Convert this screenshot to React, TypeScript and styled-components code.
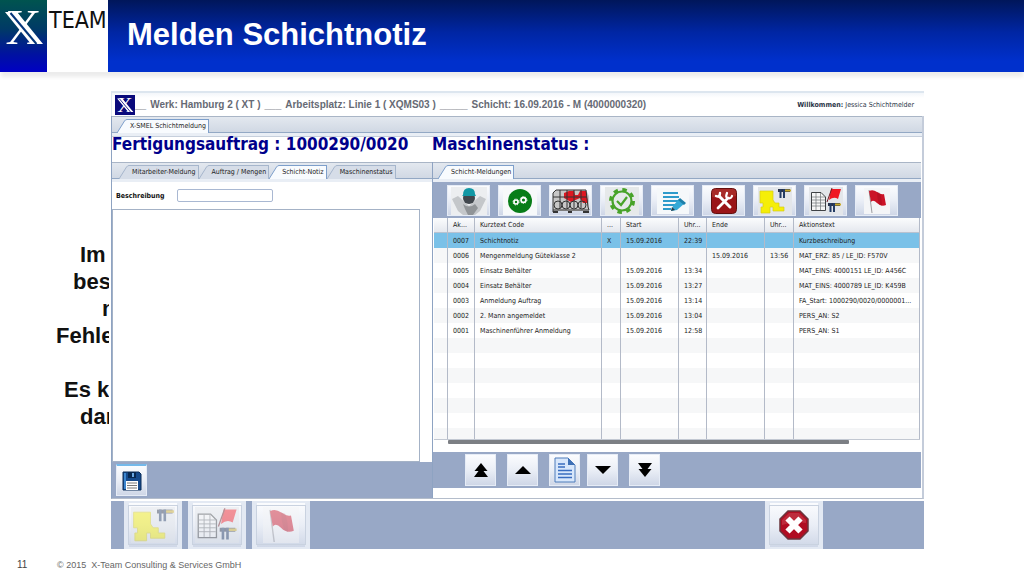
import React from "react";
import styled, { createGlobalStyle } from "styled-components";

const UI = `"DejaVu Sans Condensed", "Noto Sans", sans-serif`;
const ARIAL = `"Liberation Sans", Arial, sans-serif`;
const steel = "#98a8c6";
const line = "#8ea3c2";

const GlobalStyle = createGlobalStyle`
  *, *::before, *::after { box-sizing: border-box; }
  body { margin: 0; background: #fff; font-family: ${ARIAL}; color: #111; }
  button, input, textarea { font-family: inherit; margin: 0; }
`;

const Page = styled.div`
  display: flex;
  flex-direction: column;
  min-height: 100vh;
  overflow: hidden;
`;

const SlideHeader = styled.header`
  display: flex;
  height: 72px;
  box-shadow: 0 6px 4px -1px #ececec;
`;

const BrandMark = styled.div`
  flex: none;
  width: 47px;
  background: linear-gradient(#00544f, #003a66 40%, #0012a0 75%, #0000c4);
`;

const BrandName = styled.div`
  flex: none;
  width: 61px;
  padding: 7px 0 0 2px;
  background: #fff;
  font: 400 23px/27px ${UI};
  white-space: nowrap;
`;

const TitleBar = styled.div`
  flex: 1;
  display: flex;
  align-items: center;
  padding: 0 19px 2px;
  background: linear-gradient(#00165a, #0026a4 45%, #0030cc 85%, #0030cc);
`;

const Title = styled.h1`
  margin: 0;
  color: #fff;
  font-size: 31px;
  line-height: 36px;
`;

const Stage = styled.main`
  display: flex;
  padding-top: 19px;
`;

const Notes = styled.aside`
  flex: none;
  width: 111px;
  padding-top: 150px;
  border-right: 2px solid #fff;
  overflow: hidden;
`;

const NoteLine = styled.p<{ $indent: number }>`
  margin: 0;
  min-height: 27px;
  padding-left: ${(p) => p.$indent}px;
  font-size: 22px;
  font-weight: 700;
  line-height: 27px;
  white-space: nowrap;
`;

const Frame = styled.section`
  flex: 1;
  min-width: 0;
  margin-right: 100px;
  font-family: ${UI};
`;

const InfoBar = styled.div`
  display: flex;
  align-items: center;
  height: 25px;
  padding: 0 10px 0 3px;
  border-top: 2px solid #dde6ef;
  border-left: 1px solid #dde6ef;
  background: linear-gradient(#f3f6fa, #fff 5px);
`;

const InfoText = styled.div`
  display: flex;
  gap: 4px;
  flex: 1;
  color: #666a74;
  font: 700 10px/14px ${ARIAL};
  white-space: pre;
`;

const Welcome = styled.div`
  color: #2a3547;
  font-size: 7px;
  white-space: nowrap;
`;

const Body = styled.div`
  border-left: 1px solid ${line};
  border-right: 2px solid #c4ccda;
  border-bottom: 1px solid #b4bdcb;
`;

const TabStrip = styled.div<{ $start?: number }>`
  display: flex;
  align-items: flex-end;
  height: 20px;
  padding-left: ${(p) => p.$start ?? 0}px;
  border-top: 1px solid #a9b5c6;
  border-bottom: 3px solid #e9eef5;
  background: linear-gradient(#e3e8ef, #cfd7e3);
  box-shadow: inset 0 -1px 0 #93a8c4;
`;

const TabButton = styled.button<{ $active?: boolean }>`
  display: flex;
  height: 14px;
  padding: 0;
  border: 0;
  background: none;
  color: #222;
  font-size: 7px;
  line-height: 13px;
  white-space: nowrap;

  svg { display: block; }
  span {
    padding: 0 2px 0 3px;
    border-top: 1px solid ${(p) => (p.$active ? "#7d9fcb" : "#a6b6cc")};
    border-right: 1px solid ${(p) => (p.$active ? "#7d9fcb" : "#a6b6cc")};
    background: ${(p) => (p.$active ? "#f8fbfe" : "#d6dde8")};
  }
`;

const Headline = styled.div`
  display: grid;
  grid-template-columns: 320px 1fr;
  height: 26px;
  border-top: 1px solid #c6cfdc;
  background: #fff;
`;

const HeadlineText = styled.h2`
  margin: 0;
  color: #00008b;
  font: 700 17px/15px ${UI};
  white-space: nowrap;
`;

const Panels = styled.div`
  display: grid;
  grid-template-columns: 320px 1fr;
`;

const Panel = styled.section`
  display: flex;
  flex-direction: column;
  min-width: 0;
`;

const MessagePanel = styled(Panel)`
  margin-right: 1px;
  padding-bottom: 10px;
  border-left: 1px solid ${line};
`;

const FieldRow = styled.div`
  display: flex;
  align-items: center;
  height: 27px;
  padding-left: 4px;
`;

const FieldLabel = styled.label`
  width: 61px;
  font-size: 7px;
  font-weight: 700;
`;

const TextField = styled.input`
  width: 96px;
  height: 13px;
  padding: 0 3px;
  border: 1px solid #a9b8d2;
  border-radius: 2px;
  background: #fff;
  font-size: 7px;
`;

const NoteField = styled.textarea`
  display: block;
  width: 308px;
  height: 253px;
  padding: 3px;
  border: 1px solid #a4b2c6;
  background: #fff;
  font-size: 8px;
  resize: none;
`;

const SaveBar = styled.div`
  flex: 1;
  padding: 2px 4px;
  background: ${steel};
`;

const ToolBar = styled.div`
  display: flex;
  gap: 8px;
  height: 36px;
  padding: 3px 0 0 14px;
  background: ${steel};
`;

const PagerBar = styled.div`
  display: flex;
  gap: 7px;
  height: 36px;
  padding: 2px 0 0 32px;
  background: ${steel};
`;

const PagerGroup = styled.div`
  display: flex;
  gap: 11px;
`;

const IconButton = styled.button<{ $w: number; $h: number; $accent?: boolean }>`
  display: flex;
  align-items: center;
  justify-content: center;
  flex: none;
  width: ${(p) => p.$w}px;
  height: ${(p) => p.$h}px;
  padding: 0;
  border: 1px solid #e6ecf6;
  border-top: ${(p) => (p.$accent ? "2px solid #74b9ea" : "1px solid #e6ecf6")};
  background: linear-gradient(#fbfcfe, #eaeef6 50%, #cfd7e7);

  svg { display: block; }
`;

const FooterButton = styled(IconButton)`
  border: 4px solid #e3e9f3;
  border-width: 2px 5px;
  outline: 1px solid #c9d2e0;
  outline-offset: -5px;

  &:disabled svg { opacity: 0.45; }
`;

const TableArea = styled.div`
  height: 234px;
  overflow: hidden;
  padding: 0 1px;
  background: #fff;
`;

const TableClip = styled.div`
  height: 222px;
  overflow: hidden;
  border-bottom: 1px solid #c2c8d2;
`;

const MessageTable = styled.table`
  width: 100%;
  table-layout: fixed;
  border-collapse: separate;
  border-spacing: 0;
  color: #222;
  font-size: 7px;
  line-height: 14px;

  th, td {
    height: 15px;
    padding: 0 0 0 5px;
    border-right: 1px solid #b3bac8;
    font-weight: 400;
    text-align: left;
    white-space: nowrap;
    overflow: hidden;
  }
  th {
    background: linear-gradient(#fbfcfd, #e4e7ee);
    border-bottom: 1px solid #b9c2d0;
  }
`;

const MessageRow = styled.tr<{ $selected?: boolean }>`
  background: ${(p) => (p.$selected ? "#7ac1e8" : "#fff")};
  &:nth-child(even) { background: #f6f7f8; }
`;

const ScrollTrack = styled.div`
  height: 4px;
  padding-left: 14px;
`;

const ScrollThumb = styled.div`
  width: 85%;
  height: 4px;
  border-radius: 1px;
  background: #7c7f84;
`;

const BottomBar = styled.div`
  display: flex;
  gap: 6px;
  height: 48px;
  margin-top: 2px;
  padding: 0 101px 0 13px;
  background: ${steel};
`;

const Spacer = styled.div`
  flex: 1;
`;

const SlideFooter = styled.footer`
  display: flex;
  align-items: center;
  padding: 9px 0 0 17px;
  color: #666;
  font-size: 9px;
  line-height: 14px;
  white-space: pre;
`;

const PageNumber = styled.span`
  width: 40px;
  color: #444;
  font-size: 10px;
`;

function XMark({ size, boxed }: { size: number; boxed?: boolean }) {
  return (
    <svg width={size} height={boxed ? size : 72} viewBox={boxed ? "0 4 47 47" : "0 0 47 72"} role="img" aria-label="X">
      {boxed && <rect x="0" y="4" width="47" height="47" fill="#0a0a7c" />}
      <text x="23.5" y="44" textAnchor="middle" fontFamily="Liberation Serif, serif" fontSize="50" fill="#fff">X</text>
      <path d="M5 12H17L43 44H31Z" fill="#fff" />
      <path d="M10.500 13 36.500 44" stroke={boxed ? "#0a0a7c" : "#04357a"} strokeWidth="2" />
    </svg>
  );
}

function Tab({ label, active }: { label: string; active?: boolean }) {
  return (
    <TabButton type="button" role="tab" aria-selected={!!active} $active={active}>
      <svg width="10" height="14" viewBox="0 0 10 14">
        <path d="M0 14 7.500 2Q8.500 .5 10 .5V14Z" fill={active ? "#f8fbfe" : "#d6dde8"} />
        <path d="M0 14 7.500 2Q8.500 .5 10 .5" fill="none" stroke={active ? "#7d9fcb" : "#a6b6cc"} />
      </svg>
      <span>{label}</span>
    </TabButton>
  );
}

const WorkerIcon = () => (
  <svg width="36" height="28" viewBox="0 0 36 28">
    <rect width="36" height="28" fill="#eceef0" />
    <path d="M1 12 7 9 18 19 29 9 35 12 29 24 24 28H12L7 24Z" fill="#c4c7ca" />
    <path d="M12 17Q18 22 24 17L27 21 22 28H17L14 22Z" fill="#909497" />
    <circle cx="18" cy="11" r="6" fill="#41474d" />
    <path d="M12 8Q12 1 18 1T24 7L25 9H11Z" fill="#1298a5" />
  </svg>
);

const SmallGear = ({ x, y, r }: { x: number; y: number; r: number }) => (
  <g fill="none" stroke="#fff">
    <circle cx={x} cy={y} r={r} strokeWidth="1.600" />
    <circle cx={x} cy={y} r={r + 1} strokeWidth="1" strokeDasharray="1.200 1.200" />
  </g>
);

const GearsIcon = () => (
  <svg width="34" height="28" viewBox="0 0 34 28">
    <rect width="34" height="28" fill="#f7f9fa" />
    <circle cx="17" cy="14" r="12" fill="#087d18" />
    <SmallGear x={13} y={15} r={2} />
    <SmallGear x={20.5} y={13} r={2.4} />
  </svg>
);

const RackIcon = () => (
  <svg width="38" height="26" viewBox="0 0 38 26">
    <path d="M1 4 4 2H34L37 8V23H1Z" fill="#c7c7c7" />
    <path d="M12 5 17 3H22L23 7H26L28 3H34L36 15H31L28 10 19 14 12 10Z" fill="#df1721" />
    <g fill="none" stroke="#343434">
      <path d="M1 24V5L4 2H34L36 19 37 22H1M1 9H35M8 2V20M15 2V20M22 2V20M29 2V20" />
      <circle cx="6" cy="17" r="4" /><circle cx="14" cy="17" r="4" /><circle cx="22" cy="17" r="4" /><circle cx="30" cy="17" r="4" />
      <path d="M1 24H6M16 24H20M31 24H37" strokeWidth="2" />
    </g>
  </svg>
);

const QualityIcon = () => (
  <svg width="34" height="28" viewBox="0 0 34 28">
    <rect width="34" height="28" fill="#e6e9ea" />
    <g fill="none" stroke="#48a329">
      <circle cx="17" cy="14" r="11.500" strokeWidth="3" strokeDasharray="4.500 4.530" />
      <circle cx="17" cy="14" r="9.500" strokeWidth="2.200" />
      <path d="M12 14 16 18 22 10" strokeWidth="2.200" />
    </g>
  </svg>
);

const EditIcon = () => (
  <svg width="32" height="26" viewBox="0 0 32 26">
    <rect width="32" height="26" fill="#f5f8fa" />
    <path d="M6 5H21M6 9H22M6 13H22M6 17H18M6 21H14" stroke="#2e9bcb" strokeWidth="2" />
    <path d="M16 18 22 11 28 15 20 22 14 23Z" fill="#35a9d6" />
    <path d="M21 12 23 10 29 15 27 17Z" fill="#1d7fa9" />
    <path d="M15 19 18 22 14 23Z" fill="#263f4d" />
  </svg>
);

const RepairIcon = () => (
  <svg width="26" height="26" viewBox="0 0 26 26">
    <rect x=".5" y=".5" width="25" height="25" rx="4" fill="#9a1518" stroke="#64100f" />
    <path d="M1 4Q1 1 5 1H21Q25 1 25 5V8Q13 12 1 9Z" fill="#b23b34" opacity=".6" />
    <g fill="none" stroke="#fff" strokeLinecap="round">
      <path d="M8 8 19 19" strokeWidth="3" />
      <path d="M5 8Q9 10 9 5" strokeWidth="2.400" />
      <path d="M7 20 17 10" strokeWidth="2.800" />
      <path d="M16 5Q14 10 17 10 20 11 21 8" strokeWidth="2.200" />
    </g>
  </svg>
);

const Valve = ({ x, y }: { x: number; y: number }) => (
  <g transform={`translate(${x} ${y})`}>
    <path d="M0 1.500H12" stroke="#2b3348" strokeWidth="3" />
    <path d="M6 1.500H13" stroke="#c9aa27" strokeWidth="2" />
    <path d="M2.500 0V9M6 0V9" stroke="#243c64" strokeWidth="2" />
  </g>
);

const PartIcon = ({ scale = 1 }: { scale?: number }) => (
  <svg width={34 * scale} height={28 * scale} viewBox="0 0 34 28">
    <rect width="34" height="28" fill="#e3e6ea" />
    <path d="M2 4H15V13L17 16H21V20H26V24H15V20H12V26H3V20H5V16H2Z" fill="#f5ee08" stroke="#d6cc18" strokeWidth=".7" />
    <Valve x={20} y={2} />
  </svg>
);

const ReportIcon = ({ scale = 1 }: { scale?: number }) => (
  <svg width={34 * scale} height={28 * scale} viewBox="0 0 34 28">
    <rect width="34" height="28" fill="#e3e6ea" />
    <path d="M2.500 5.500H12L16.500 10V23.500H2.500Z" fill="#f6f6f6" stroke="#3f4245" />
    <path d="M3 10H16M3 13H16M3 16H16M3 19H16M7 6V23M11.500 6V23" stroke="#6e7276" strokeWidth=".7" />
    <path d="M22 2 32 2 29 12Q25 9 20 13Z" fill="#ef1822" />
    <path d="M23 1 18 15" stroke="#701c22" />
    <Valve x={19} y={16} />
  </svg>
);

const FlagIcon = ({ scale = 1 }: { scale?: number }) => (
  <svg width={26 * scale} height={26 * scale} viewBox="0 0 26 26">
    <rect width="26" height="26" fill="#f4f5f7" />
    <path d="M5 2 8 25" stroke="#9c9ca0" />
    <path d="M5 3Q9 1 13 4T20 6L22 17Q17 19 13 15T7 14Z" fill="#cb1327" />
    <path d="M13 4Q13 10 15 16L18 18Q18 11 16 5Z" fill="#a80b1e" opacity=".5" />
  </svg>
);

const DiskIcon = () => (
  <svg width="20" height="20" viewBox="0 0 20 20">
    <path d="M1 1H17L19 3V19H1Z" fill="#164a8c" stroke="#0b2c58" />
    <path d="M2 2H4V18H2Z" fill="#3c86cf" />
    <path d="M6 1H14V7H6Z" fill="#082850" />
    <path d="M10 2H12V6H10Z" fill="#6ba7e2" />
    <path d="M4 10H16V19H4Z" fill="#fff" />
    <path d="M5 12H15M5 14.500H15M5 17H15" stroke="#555" strokeWidth=".8" />
  </svg>
);

const DocumentIcon = () => (
  <svg width="22" height="26" viewBox="0 0 22 26">
    <path d="M1 1H14L21 8V25H1Z" fill="#d8e7fb" stroke="#4f7cba" />
    <path d="M14 1V8H21Z" fill="#3e70b6" />
    <path d="M4 7H11M4 10H11M4 13.500H18M4 17H18M4 20.500H18" stroke="#396dc0" strokeWidth="1.400" />
  </svg>
);

const ArrowIcon = ({ double, down }: { double?: boolean; down?: boolean }) => (
  <svg width="16" height="16" viewBox="0 0 16 16">
    <path
      d={
        double
          ? down ? "M1 1H15L10.500 7H14.500L8 15 1.500 7H5.500Z" : "M8 1 14.500 9H10.500L15 15H1L5.500 9H1.500Z"
          : down ? "M0 4H16L8 12Z" : "M8 4 16 12H0Z"
      }
      fill="#000"
    />
  </svg>
);

const StopIcon = () => (
  <svg width="30" height="30" viewBox="0 0 30 30">
    <path d="M9 1H21L29 9V21L21 29H9L1 21V9Z" fill="#b00d22" stroke="#69363d" strokeWidth="1.500" />
    <path d="M10 3H20L27 10V13Q15 11 3 15V10Z" fill="#ca4652" opacity=".55" />
    <path d="M8.500 8.500 21.500 21.500M21.500 8.500 8.500 21.500" stroke="#fff" strokeWidth="6" />
  </svg>
);

const tools = [
  { name: "Mitarbeiter", icon: <WorkerIcon /> },
  { name: "Maschine", icon: <GearsIcon /> },
  { name: "Behälter", icon: <RackIcon /> },
  { name: "Qualität", icon: <QualityIcon /> },
  { name: "Notiz", icon: <EditIcon /> },
  { name: "Störung", icon: <RepairIcon /> },
  { name: "Teil", icon: <PartIcon /> },
  { name: "Bericht", icon: <ReportIcon /> },
  { name: "Ende", icon: <FlagIcon /> },
];

const columns = [
  { title: "", width: 14 },
  { title: "Ak...", width: 27 },
  { title: "Kurztext Code", width: 127 },
  { title: "...", width: 19 },
  { title: "Start", width: 58 },
  { title: "Uhr...", width: 28 },
  { title: "Ende", width: 58 },
  { title: "Uhr...", width: 29 },
  { title: "Aktionstext" },
];

const messages = [
  ["", "0007", "Schichtnotiz", "X", "15.09.2016", "22:39", "", "", "Kurzbeschreibung"],
  ["", "0006", "Mengenmeldung Güteklasse 2", "", "", "", "15.09.2016", "13:56", "MAT_ERZ: 85 / LE_ID: F570V"],
  ["", "0005", "Einsatz Behälter", "", "15.09.2016", "13:34", "", "", "MAT_EINS: 4000151 LE_ID: A456C"],
  ["", "0004", "Einsatz Behälter", "", "15.09.2016", "13:27", "", "", "MAT_EINS: 4000789 LE_ID: K459B"],
  ["", "0003", "Anmeldung Auftrag", "", "15.09.2016", "13:14", "", "", "FA_Start: 1000290/0020/0000001..."],
  ["", "0002", "2. Mann angemeldet", "", "15.09.2016", "13:04", "", "", "PERS_AN: S2"],
  ["", "0001", "Maschinenführer Anmeldung", "", "15.09.2016", "12:58", "", "", "PERS_AN: S1"],
  ...Array.from({ length: 7 }, () => Array(9).fill("") as string[]),
];

const notes = [
  { text: "Im", indent: 80 },
  { text: "bes", indent: 73 },
  { text: "n", indent: 102 },
  { text: "Fehle", indent: 56 },
  { text: "", indent: 0 },
  { text: "Es k", indent: 64 },
  { text: "dar", indent: 80 },
];

export default function App() {
  return (
    <Page>
      <GlobalStyle />
      <SlideHeader>
        <BrandMark><XMark size={47} /></BrandMark>
        <BrandName>TEAM</BrandName>
        <TitleBar><Title>Melden Schichtnotiz</Title></TitleBar>
      </SlideHeader>

      <Stage>
        <Notes>
          {notes.map((n, i) => <NoteLine key={i} $indent={n.indent}>{n.text}</NoteLine>)}
        </Notes>

        <Frame>
          <InfoBar>
            <XMark size={20} boxed />
            <InfoText>
              <span>__</span>
              <span>Werk: Hamburg 2 ( XT )</span>
              <span>___</span>
              <span>Arbeitsplatz: Linie 1 ( XQMS03 )</span>
              <span>_____</span>
              <span>Schicht: 16.09.2016 - M (4000000320)</span>
            </InfoText>
            <Welcome><b>Willkommen:</b> Jessica Schichtmelder</Welcome>
          </InfoBar>

          <Body>
            <TabStrip role="tablist" $start={5}>
              <Tab label="X-SMEL Schichtmeldung" active />
            </TabStrip>
            <Headline>
              <HeadlineText>Fertigungsauftrag : 1000290/0020</HeadlineText>
              <HeadlineText>Maschinenstatus :</HeadlineText>
            </Headline>

            <Panels>
              <Panel>
                <TabStrip role="tablist" $start={7}>
                  <Tab label="Mitarbeiter-Meldung" />
                  <Tab label="Auftrag / Mengen" />
                  <Tab label="Schicht-Notiz" active />
                  <Tab label="Maschinenstatus" />
                </TabStrip>
                <FieldRow>
                  <FieldLabel htmlFor="subject">Beschreibung</FieldLabel>
                  <TextField id="subject" type="text" />
                </FieldRow>
                <NoteField aria-label="Schicht-Notiz" />
                <SaveBar>
                  <IconButton type="button" aria-label="Sichern" $w={31} $h={32} $accent><DiskIcon /></IconButton>
                </SaveBar>
              </Panel>

              <MessagePanel>
                <TabStrip role="tablist" $start={5}>
                  <Tab label="Schicht-Meldungen" active />
                </TabStrip>
                <ToolBar>
                  {tools.map((t) => (
                    <IconButton key={t.name} type="button" aria-label={t.name} $w={43} $h={31}>{t.icon}</IconButton>
                  ))}
                </ToolBar>
                <TableArea>
                  <TableClip>
                    <MessageTable>
                      <colgroup>
                        {columns.map((c, i) => <col key={i} width={c.width} />)}
                      </colgroup>
                      <thead>
                        <tr>{columns.map((c, i) => <th key={i}>{c.title}</th>)}</tr>
                      </thead>
                      <tbody>
                        {messages.map((m, r) => (
                          <MessageRow key={r} $selected={r === 0}>
                            {m.map((cell, i) => <td key={i}>{cell}</td>)}
                          </MessageRow>
                        ))}
                      </tbody>
                    </MessageTable>
                  </TableClip>
                  <ScrollTrack><ScrollThumb /></ScrollTrack>
                </TableArea>
                <PagerBar>
                  <PagerGroup>
                    <IconButton type="button" aria-label="Anfang" $w={31} $h={32}><ArrowIcon double /></IconButton>
                    <IconButton type="button" aria-label="Zurück" $w={31} $h={32}><ArrowIcon /></IconButton>
                    <IconButton type="button" aria-label="Dokument" $w={31} $h={32}><DocumentIcon /></IconButton>
                  </PagerGroup>
                  <PagerGroup>
                    <IconButton type="button" aria-label="Weiter" $w={31} $h={32}><ArrowIcon down /></IconButton>
                    <IconButton type="button" aria-label="Letzte" $w={31} $h={32}><ArrowIcon double down /></IconButton>
                  </PagerGroup>
                </PagerBar>
              </MessagePanel>
            </Panels>
          </Body>

          <BottomBar>
            <FooterButton type="button" aria-label="Teil" disabled $w={58} $h={48}><PartIcon scale={1.3} /></FooterButton>
            <FooterButton type="button" aria-label="Bericht" disabled $w={58} $h={48}><ReportIcon scale={1.3} /></FooterButton>
            <FooterButton type="button" aria-label="Ende" disabled $w={58} $h={48}><FlagIcon scale={1.4} /></FooterButton>
            <Spacer />
            <FooterButton type="button" aria-label="Abbrechen" $w={58} $h={48}><StopIcon /></FooterButton>
          </BottomBar>
        </Frame>
      </Stage>

      <SlideFooter>
        <PageNumber>11</PageNumber>
        <span>© 2015  X-Team Consulting &amp; Services GmbH</span>
      </SlideFooter>
    </Page>
  );
}
